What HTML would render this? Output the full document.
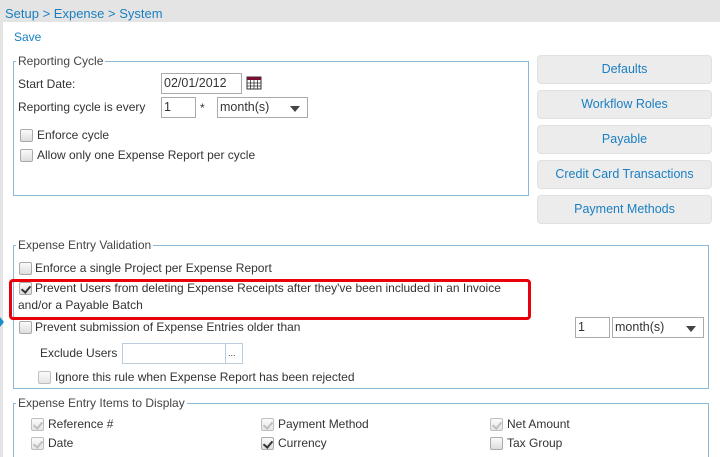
<!DOCTYPE html>
<html><head><meta charset="utf-8"><style>
*{box-sizing:border-box}
html,body{overflow:hidden}
body{margin:0;width:720px;height:457px;background:#fff;font-family:"Liberation Sans","DejaVu Sans",sans-serif;font-size:12px;color:#333;position:relative}
.a{position:absolute;white-space:nowrap}
.top{position:absolute;left:0;top:0;width:720px;height:22px;background:#e4e4e4}
.ls{position:absolute;left:0;top:0;width:3px;height:457px;background:#e4e4e4}
.blue{color:#1a7fc1}
.fs{position:absolute;border:1px solid #8db9d6}
.lg{position:absolute;background:#fff;padding:0 2px;color:#444}
.cb{position:absolute;width:13px;height:13px;border:1px solid #aaa;border-radius:2px;background:linear-gradient(#fafafa,#ddd)}
.ck::after{content:"";position:absolute;left:3px;top:1px;width:4px;height:7px;border:solid #333;border-width:0 2px 2px 0;transform:rotate(40deg)}
.dis::after{border-color:#aaa}
.dis{opacity:.75}
.in{position:absolute;border:1px solid #aaa;background:#fff;padding:2px 2px;font-size:12.5px}
.sel::after{content:"";position:absolute;right:7px;top:8px;border:5px solid transparent;border-top:6px solid #444;border-bottom:0}
.btn{position:absolute;left:537px;width:175px;height:29px;background:#ececec;border:1px solid #e0e0e0;border-radius:4px;color:#1a7fc1;text-align:center;line-height:27px;font-size:12.5px}
</style></head><body>
<div class="top"></div><div class="ls"></div>
<div class="a blue" style="left:5px;top:6px;font-size:13px">Setup &gt; Expense &gt; System</div>
<div class="a blue" style="left:14px;top:30px">Save</div>

<div class="fs" style="left:13px;top:61px;width:516px;height:135px"></div>
<div class="lg" style="left:16px;top:54px">Reporting Cycle</div>
<div class="a" style="left:18px;top:77px">Start Date:</div>
<div class="in" style="left:161px;top:73px;width:81px;height:21px">02/01/2012</div>
<svg class="a" style="left:246px;top:75px" width="16" height="15"><rect x="1" y="2" width="14" height="12" fill="#fff" stroke="#333"/><rect x="1" y="2" width="14" height="3" fill="#7a1030"/><path d="M1 8H15M1 11H15M4.5 5V14M8 5V14M11.5 5V14" stroke="#333" stroke-width=".8"/></svg>
<div class="a" style="left:18px;top:100px">Reporting cycle is every</div>
<div class="in" style="left:161px;top:97px;width:35px;height:21px">1</div>
<div class="a" style="left:200px;top:101px">*</div>
<div class="in sel" style="left:217px;top:97px;width:91px;height:21px">month(s)</div>
<div class="cb" style="left:20px;top:129px"></div><div class="a" style="left:37px;top:128px">Enforce cycle</div>
<div class="cb" style="left:20px;top:149px"></div><div class="a" style="left:37px;top:148px">Allow only one Expense Report per cycle</div>

<div class="btn" style="top:55px">Defaults</div>
<div class="btn" style="top:90px">Workflow Roles</div>
<div class="btn" style="top:125px">Payable</div>
<div class="btn" style="top:160px">Credit Card Transactions</div>
<div class="btn" style="top:195px">Payment Methods</div>

<div class="fs" style="left:13px;top:245px;width:696px;height:144px"></div>
<div class="lg" style="left:16px;top:238px">Expense Entry Validation</div>
<div class="cb" style="left:19px;top:262px"></div><div class="a" style="left:35px;top:261px">Enforce a single Project per Expense Report</div>
<div class="a" style="left:9px;top:279px;width:522px;height:41px;border:3px solid #e8000b;border-radius:4px"></div>
<div class="cb ck" style="left:19px;top:282px"></div>
<div class="a" style="left:35px;top:281px">Prevent Users from deleting Expense Receipts after they've been included in an Invoice</div>
<div class="a" style="left:18px;top:298px">and/or a Payable Batch</div>
<div class="a" style="left:0;top:317px;border:5px solid transparent;border-left:4px solid #1a8fd0"></div>
<div class="cb" style="left:19px;top:321px"></div><div class="a" style="left:35px;top:320px">Prevent submission of Expense Entries older than</div>
<div class="in" style="left:575px;top:317px;width:35px;height:21px">1</div>
<div class="in sel" style="left:612px;top:317px;width:92px;height:21px">month(s)</div>
<div class="a" style="left:40px;top:346px">Exclude Users</div>
<div class="in" style="left:122px;top:343px;width:104px;height:21px;border-color:#bcd"></div>
<div class="in" style="left:225px;top:343px;width:18px;height:21px;border-color:#bcd;font-size:9px;padding:4px 2px 0">...</div>
<div class="cb dis" style="left:38px;top:371px"></div><div class="a" style="left:55px;top:370px">Ignore this rule when Expense Report has been rejected</div>

<div class="fs" style="left:13px;top:403px;width:696px;height:70px"></div>
<div class="lg" style="left:16px;top:396px">Expense Entry Items to Display</div>
<div class="cb ck dis" style="left:31px;top:418px"></div><div class="a" style="left:48px;top:417px">Reference #</div>
<div class="cb ck dis" style="left:31px;top:437px"></div><div class="a" style="left:48px;top:436px">Date</div>
<div class="cb ck dis" style="left:261px;top:418px"></div><div class="a" style="left:278px;top:417px">Payment Method</div>
<div class="cb ck" style="left:261px;top:437px"></div><div class="a" style="left:278px;top:436px">Currency</div>
<div class="cb ck dis" style="left:490px;top:418px"></div><div class="a" style="left:507px;top:417px">Net Amount</div>
<div class="cb" style="left:490px;top:437px"></div><div class="a" style="left:507px;top:436px">Tax Group</div>
</body></html>
